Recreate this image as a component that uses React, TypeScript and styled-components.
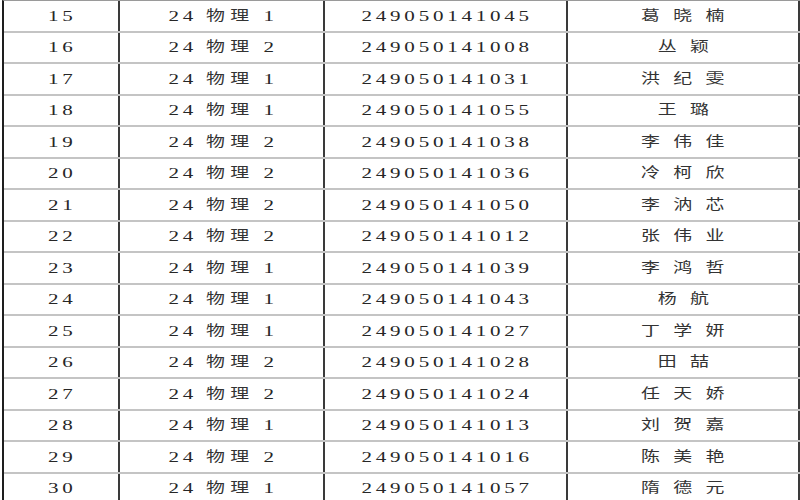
import { FC } from 'react'
import styled, { createGlobalStyle } from 'styled-components'

const GlobalStyle = createGlobalStyle`
  html, body {
    margin: 0;
    padding: 0;
    background: #ffffff;
    overflow: hidden;
  }
`

const rows: [number, string, string, string][] = [
  [15, '1', '249050141045', '葛晓楠'],
  [16, '2', '249050141008', '丛颖'],
  [17, '1', '249050141031', '洪纪雯'],
  [18, '1', '249050141055', '王璐'],
  [19, '2', '249050141038', '李伟佳'],
  [20, '2', '249050141036', '冷柯欣'],
  [21, '2', '249050141050', '李汭芯'],
  [22, '2', '249050141012', '张伟业'],
  [23, '1', '249050141039', '李鸿哲'],
  [24, '1', '249050141043', '杨航'],
  [25, '1', '249050141027', '丁学妍'],
  [26, '2', '249050141028', '田喆'],
  [27, '2', '249050141024', '任天娇'],
  [28, '1', '249050141013', '刘贺嘉'],
  [29, '2', '249050141016', '陈美艳'],
  [30, '1', '249050141057', '隋德元'],
]

const Page = styled.div`
  width: 800px;
  height: 500px;
  overflow: hidden;
  padding-left: 2px;
  box-sizing: border-box;
`

const Table = styled.div`
  width: 798px;
  border-top: 1px solid #9a9a9a;
  border-left: 2px solid #1e1e1e;
  box-sizing: border-box;
`

const Row = styled.div`
  display: grid;
  grid-template-columns: 116px 205px 243px 1fr;
  height: 31.53px;
  box-sizing: border-box;
  border-bottom: 2px solid #c4c4c4;
`

const Cell = styled.div`
  display: flex;
  align-items: center;
  justify-content: center;
  border-right: 2px solid #3a3a3a;
  box-sizing: border-box;
`

const Text = styled.span<{ $spacing: number }>`
  display: inline-block;
  height: 18px;
  line-height: 18px;
  font-family: "Liberation Serif", "Noto Sans CJK SC", serif;
  font-size: 15px;
  color: #262626;
  letter-spacing: ${p => p.$spacing}px;
  margin-right: -${p => p.$spacing}px;
  transform: scaleX(1.4);
  white-space: pre;
`

const Han = styled.span<{ $spacing: number; $trim?: boolean }>`
  font-family: "Noto Sans CJK SC", sans-serif;
  font-size: 13.5px;
  line-height: 0;
  letter-spacing: ${p => p.$spacing}px;
  margin-right: ${p => (p.$trim ? -p.$spacing : 0)}px;
  vertical-align: 1px;
  color: #333333;
`

const App: FC = () => {
  return (
    <Page>
      <GlobalStyle />
      <Table>
        {rows.map(([no, cls, id, name]) => (
          <Row key={no}>
            <Cell><Text $spacing={2.7}>{no}</Text></Cell>
            <Cell>
              <Text $spacing={2.7}>
                {'24 '}<Han $spacing={3.8}>物理</Han>{` ${cls}`}
              </Text>
            </Cell>
            <Cell><Text $spacing={2.7}>{id}</Text></Cell>
            <Cell>
              <Text $spacing={0}><Han $spacing={9.5} $trim>{name}</Han></Text>
            </Cell>
          </Row>
        ))}
      </Table>
    </Page>
  )
}

export default App
